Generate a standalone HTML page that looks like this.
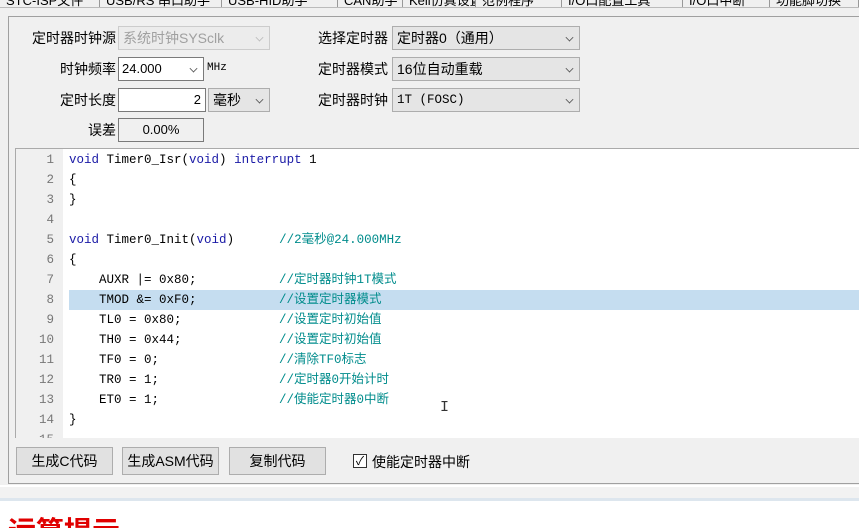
<!DOCTYPE html>
<html style="width:859px;height:528px;overflow:hidden"><head><meta charset="utf-8"><style>
*{margin:0;padding:0;box-sizing:border-box}
body{width:859px;height:528px;overflow:hidden;background:#f0f0f0;font-family:"Liberation Sans","Noto Sans CJK SC",sans-serif;font-size:13px;color:#000;position:relative}
.abs{position:absolute}
.tabs{left:0;top:0;width:859px;height:8px;background:#f0f0f0;overflow:hidden;border-bottom:1px solid #bbb}
.tab{position:absolute;top:-10px;height:18px;border-right:1px solid #999;font-size:13px;white-space:nowrap;padding-left:6px;overflow:hidden}
.panel{left:8px;top:16px;width:860px;height:468px;border:1px solid #a0a0a0;background:#f0f0f0}
.lbl{position:absolute;text-align:right;font-size:14px;line-height:24px}
.box{position:absolute;border:1px solid #7a7a7a;background:#fff;font-size:13px;line-height:22px;padding-left:3px;white-space:nowrap}
.sel{position:absolute;border:1px solid #adadad;background:#e5e5e5;font-size:14px;line-height:22px;padding-left:4px;white-space:nowrap}
.chev{position:absolute;right:6px;top:7px;width:7px;height:7px;border-right:1px solid #555;border-bottom:1px solid #555;transform:rotate(45deg) scale(.8)}
.code{left:15px;top:148px;width:844px;height:290px;background:#fff;border-top:1px solid #aaa;border-left:1px solid #aaa;overflow:hidden}
.gut{position:absolute;left:0;top:0;width:47px;height:290px;background:#f0f0f0}
.ln{position:absolute;left:0;width:38px;text-align:right;color:#777;font-family:"Liberation Mono",monospace;font-size:12.5px;line-height:20px}
.cl{position:absolute;left:53px;font-family:"Liberation Mono","Noto Sans CJK SC",monospace;font-size:12.5px;line-height:20px;white-space:pre}
.k{color:#1a1aa6}.c{color:#008c8c;font-family:"Liberation Mono","Noto Sans CJK SC",monospace}
.btn{position:absolute;top:447px;height:28px;border:1px solid #adadad;background:#e1e1e1;font-size:14px;line-height:26px;text-align:center}
</style></head><body>
<div class="abs tabs">
<div class="tab" style="left:0;width:100px">STC-ISP文件</div>
<div class="tab" style="left:100px;width:122px">USB/RS 串口助手</div>
<div class="tab" style="left:222px;width:116px">USB-HID助手</div>
<div class="tab" style="left:338px;width:65px">CAN助手</div>
<div class="tab" style="left:403px;width:73px">Keil仿真设置</div>
<div class="tab" style="left:476px;width:86px">范例程序</div>
<div class="tab" style="left:562px;width:121px">I/O口配置工具</div>
<div class="tab" style="left:683px;width:87px">I/O口中断</div>
<div class="tab" style="left:770px;width:89px">功能脚切换</div>
</div>
<div class="abs panel"></div>

<div class="lbl" style="left:10px;top:26px;width:106px">定时器时钟源</div>
<div class="sel" style="left:118px;top:26px;width:152px;height:24px;background:#ececec;color:#a0a0a0;border-color:#ccc">系统时钟SYSclk<span class="chev" style="border-color:#bbb"></span></div>
<div class="lbl" style="left:10px;top:57px;width:106px">时钟频率</div>
<div class="box" style="left:118px;top:57px;width:86px;height:24px">24.000<span class="chev"></span></div>
<div class="abs" style="left:207px;top:62px;font-size:11px;font-family:'Liberation Mono',monospace">MHz</div>
<div class="lbl" style="left:10px;top:88px;width:106px">定时长度</div>
<div class="box" style="left:118px;top:88px;width:88px;height:24px;text-align:right;padding-right:4px">2</div>
<div class="sel" style="left:208px;top:88px;width:62px;height:24px">毫秒<span class="chev"></span></div>
<div class="lbl" style="left:10px;top:118px;width:106px">误差</div>
<div class="box" style="left:118px;top:118px;width:86px;height:24px;background:#f0f0f0;text-align:center;padding:0">0.00%</div>

<div class="lbl" style="left:290px;top:26px;width:98px">选择定时器</div>
<div class="sel" style="left:392px;top:26px;width:188px;height:24px">定时器0（通用）<span class="chev"></span></div>
<div class="lbl" style="left:290px;top:57px;width:98px">定时器模式</div>
<div class="sel" style="left:392px;top:57px;width:188px;height:24px">16位自动重载<span class="chev"></span></div>
<div class="lbl" style="left:290px;top:88px;width:98px">定时器时钟</div>
<div class="sel" style="left:392px;top:88px;width:188px;height:24px;font-family:'Liberation Mono',monospace;font-size:12.5px">1T  (FOSC)<span class="chev"></span></div>

<div class="abs code">
<div class="gut"></div>
<div class="abs" style="left:53px;top:141px;width:800px;height:20px;background:#c5ddf0"></div>
<div class="ln" style="top:1px">1</div><div class="ln" style="top:21px">2</div><div class="ln" style="top:41px">3</div><div class="ln" style="top:61px">4</div><div class="ln" style="top:81px">5</div><div class="ln" style="top:101px">6</div><div class="ln" style="top:121px">7</div><div class="ln" style="top:141px">8</div><div class="ln" style="top:161px">9</div><div class="ln" style="top:181px">10</div><div class="ln" style="top:201px">11</div><div class="ln" style="top:221px">12</div><div class="ln" style="top:241px">13</div><div class="ln" style="top:261px">14</div><div class="ln" style="top:281px">15</div>
<div class="cl" style="top:1px"><span class="k">void</span> Timer0_Isr(<span class="k">void</span>) <span class="k">interrupt</span> 1</div>
<div class="cl" style="top:21px">{</div>
<div class="cl" style="top:41px">}</div>
<div class="cl" style="top:81px"><span class="k">void</span> Timer0_Init(<span class="k">void</span>)      <span class="c">//2毫秒@24.000MHz</span></div>
<div class="cl" style="top:101px">{</div>
<div class="cl" style="top:121px">    AUXR |= 0x80;           <span class="c">//定时器时钟1T模式</span></div>
<div class="cl" style="top:141px">    TMOD &amp;= 0xF0;           <span class="c">//设置定时器模式</span></div>
<div class="cl" style="top:161px">    TL0 = 0x80;             <span class="c">//设置定时初始值</span></div>
<div class="cl" style="top:181px">    TH0 = 0x44;             <span class="c">//设置定时初始值</span></div>
<div class="cl" style="top:201px">    TF0 = 0;                <span class="c">//清除TF0标志</span></div>
<div class="cl" style="top:221px">    TR0 = 1;                <span class="c">//定时器0开始计时</span></div>
<div class="cl" style="top:241px">    ET0 = 1;                <span class="c">//使能定时器0中断</span></div>
<div class="cl" style="top:261px">}</div>
<div class="abs" style="left:424px;top:250px;font-family:'Liberation Mono',monospace;font-size:15px;color:#333">I</div>
</div>

<div class="btn" style="left:16px;width:97px">生成C代码</div>
<div class="btn" style="left:122px;width:97px">生成ASM代码</div>
<div class="btn" style="left:229px;width:97px">复制代码</div>
<div class="abs" style="left:353px;top:454px;width:14px;height:14px;border:1px solid #333;background:#fff;font-size:12px;line-height:12px;text-align:center">✓</div>
<div class="abs" style="left:372px;top:452px;font-size:14px">使能定时器中断</div>

<div class="abs" style="left:0;top:485px;width:859px;height:43px;background:#fff;overflow:hidden">
<div class="abs" style="left:0;top:2px;width:859px;height:11px;background:#f2f2f2"></div>
<div class="abs" style="left:0;top:13px;width:859px;height:3px;background:#dde6ee"></div>
<div class="abs" style="left:8px;top:30px;font-size:28px;line-height:34px;color:#e00000;font-weight:bold;white-space:nowrap">运算提示 <span style="margin-left:80px">... ...</span></div>
</div>
</body></html>
